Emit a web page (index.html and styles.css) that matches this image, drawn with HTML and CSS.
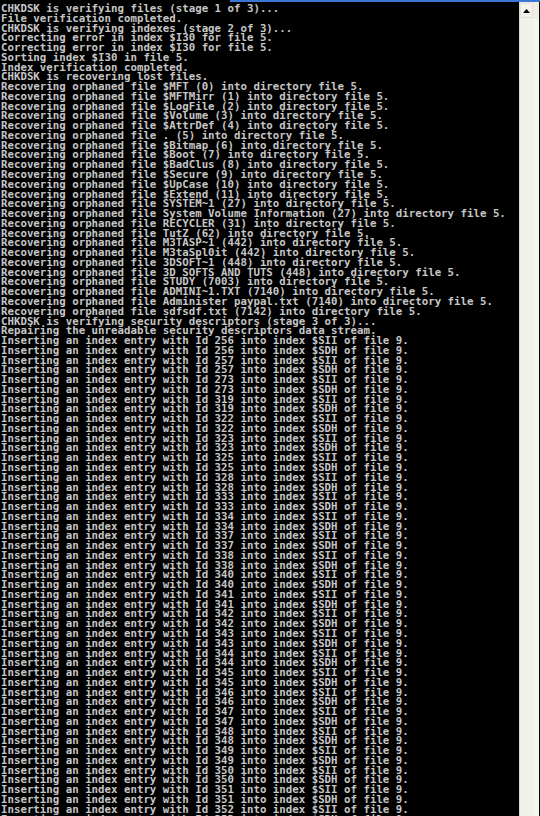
FILE: index.html
```html
<!DOCTYPE html>
<html>
<head>
<meta charset="utf-8">
<link rel="stylesheet" href="styles.css">
</head>
<body>
<div class="window">
  <div class="frame-edge"></div>
  <pre class="console">CHKDSK is verifying files (stage 1 of 3)...
File verification completed.
CHKDSK is verifying indexes (stage 2 of 3)...
Correcting error in index $I30 for file 5.
Correcting error in index $I30 for file 5.
Sorting index $I30 in file 5.
Index verification completed.
CHKDSK is recovering lost files.
Recovering orphaned file $MFT (0) into directory file 5.
Recovering orphaned file $MFTMirr (1) into directory file 5.
Recovering orphaned file $LogFile (2) into directory file 5.
Recovering orphaned file $Volume (3) into directory file 5.
Recovering orphaned file $AttrDef (4) into directory file 5.
Recovering orphaned file . (5) into directory file 5.
Recovering orphaned file $Bitmap (6) into directory file 5.
Recovering orphaned file $Boot (7) into directory file 5.
Recovering orphaned file $BadClus (8) into directory file 5.
Recovering orphaned file $Secure (9) into directory file 5.
Recovering orphaned file $UpCase (10) into directory file 5.
Recovering orphaned file $Extend (11) into directory file 5.
Recovering orphaned file SYSTEM~1 (27) into directory file 5.
Recovering orphaned file System Volume Information (27) into directory file 5.
Recovering orphaned file RECYCLER (31) into directory file 5.
Recovering orphaned file TutZ (62) into directory file 5.
Recovering orphaned file M3TASP~1 (442) into directory file 5.
Recovering orphaned file M3taSpl0it (442) into directory file 5.
Recovering orphaned file 3DSOFT~1 (448) into directory file 5.
Recovering orphaned file 3D SOFTS AND TUTS (448) into directory file 5.
Recovering orphaned file STUDY (7003) into directory file 5.
Recovering orphaned file ADMINI~1.TXT (7140) into directory file 5.
Recovering orphaned file Administer paypal.txt (7140) into directory file 5.
Recovering orphaned file sdfsdf.txt (7142) into directory file 5.
CHKDSK is verifying security descriptors (stage 3 of 3)...
Repairing the unreadable security descriptors data stream.
Inserting an index entry with Id 256 into index $SII of file 9.
Inserting an index entry with Id 256 into index $SDH of file 9.
Inserting an index entry with Id 257 into index $SII of file 9.
Inserting an index entry with Id 257 into index $SDH of file 9.
Inserting an index entry with Id 273 into index $SII of file 9.
Inserting an index entry with Id 273 into index $SDH of file 9.
Inserting an index entry with Id 319 into index $SII of file 9.
Inserting an index entry with Id 319 into index $SDH of file 9.
Inserting an index entry with Id 322 into index $SII of file 9.
Inserting an index entry with Id 322 into index $SDH of file 9.
Inserting an index entry with Id 323 into index $SII of file 9.
Inserting an index entry with Id 323 into index $SDH of file 9.
Inserting an index entry with Id 325 into index $SII of file 9.
Inserting an index entry with Id 325 into index $SDH of file 9.
Inserting an index entry with Id 328 into index $SII of file 9.
Inserting an index entry with Id 328 into index $SDH of file 9.
Inserting an index entry with Id 333 into index $SII of file 9.
Inserting an index entry with Id 333 into index $SDH of file 9.
Inserting an index entry with Id 334 into index $SII of file 9.
Inserting an index entry with Id 334 into index $SDH of file 9.
Inserting an index entry with Id 337 into index $SII of file 9.
Inserting an index entry with Id 337 into index $SDH of file 9.
Inserting an index entry with Id 338 into index $SII of file 9.
Inserting an index entry with Id 338 into index $SDH of file 9.
Inserting an index entry with Id 340 into index $SII of file 9.
Inserting an index entry with Id 340 into index $SDH of file 9.
Inserting an index entry with Id 341 into index $SII of file 9.
Inserting an index entry with Id 341 into index $SDH of file 9.
Inserting an index entry with Id 342 into index $SII of file 9.
Inserting an index entry with Id 342 into index $SDH of file 9.
Inserting an index entry with Id 343 into index $SII of file 9.
Inserting an index entry with Id 343 into index $SDH of file 9.
Inserting an index entry with Id 344 into index $SII of file 9.
Inserting an index entry with Id 344 into index $SDH of file 9.
Inserting an index entry with Id 345 into index $SII of file 9.
Inserting an index entry with Id 345 into index $SDH of file 9.
Inserting an index entry with Id 346 into index $SII of file 9.
Inserting an index entry with Id 346 into index $SDH of file 9.
Inserting an index entry with Id 347 into index $SII of file 9.
Inserting an index entry with Id 347 into index $SDH of file 9.
Inserting an index entry with Id 348 into index $SII of file 9.
Inserting an index entry with Id 348 into index $SDH of file 9.
Inserting an index entry with Id 349 into index $SII of file 9.
Inserting an index entry with Id 349 into index $SDH of file 9.
Inserting an index entry with Id 350 into index $SII of file 9.
Inserting an index entry with Id 350 into index $SDH of file 9.
Inserting an index entry with Id 351 into index $SII of file 9.
Inserting an index entry with Id 351 into index $SDH of file 9.
Inserting an index entry with Id 352 into index $SII of file 9.
Inserting an index entry with Id 352 into index $SDH of file 9.</pre>
  <div class="scrollbar">
    <div class="scroll-btn">
      <svg width="7" height="4" viewBox="0 0 7 4"><path d="M3.5 0 L7 4 L0 4 Z" fill="#000"/></svg>
    </div>
    <div class="scroll-track"></div>
  </div>
</div>
</body>
</html>
```
FILE: styles.css
```css
html, body {
  margin: 0;
  padding: 0;
  background: #000;
}
.window {
  position: relative;
  display: flex;
  width: 540px;
  height: 816px;
  overflow: hidden;
  background: #000;
}
.frame-edge {
  position: absolute;
  top: 0;
  left: 230px;
  right: 0;
  height: 2px;
  background: #3a76d6;
}
.console {
  margin: 0;
  padding: 4px 0 0 1px;
  width: 519px;
  height: 816px;
  box-sizing: border-box;
  overflow: hidden;
  color: #c6c6c6;
  font-family: "DejaVu Sans Mono", monospace;
  font-weight: bold;
  font-size: 10.75px;
  line-height: 9.76px;
  white-space: pre;
}
.scrollbar {
  display: flex;
  flex-direction: column;
  width: 20px;
  height: 816px;
  padding-top: 3px;
  box-sizing: border-box;
  background: #eeede6;
  border-left: 1px solid #d8d7cf;
}
.scroll-btn {
  display: flex;
  align-items: center;
  justify-content: center;
  width: 13px;
  height: 15px;
  background: #f4f3ee;
  border: 1px solid #e2e1da;
  box-sizing: border-box;
}
.scroll-track {
  flex: 1;
  width: 19px;
  box-sizing: border-box;
  border-right: 6px solid #f5f5ef;
  background: linear-gradient(to right, #f1f0ea 0, #f1f0ea 13px, #9c9c98 13px, #9c9c98 14px, #f5f5ef 14px);
}
```
